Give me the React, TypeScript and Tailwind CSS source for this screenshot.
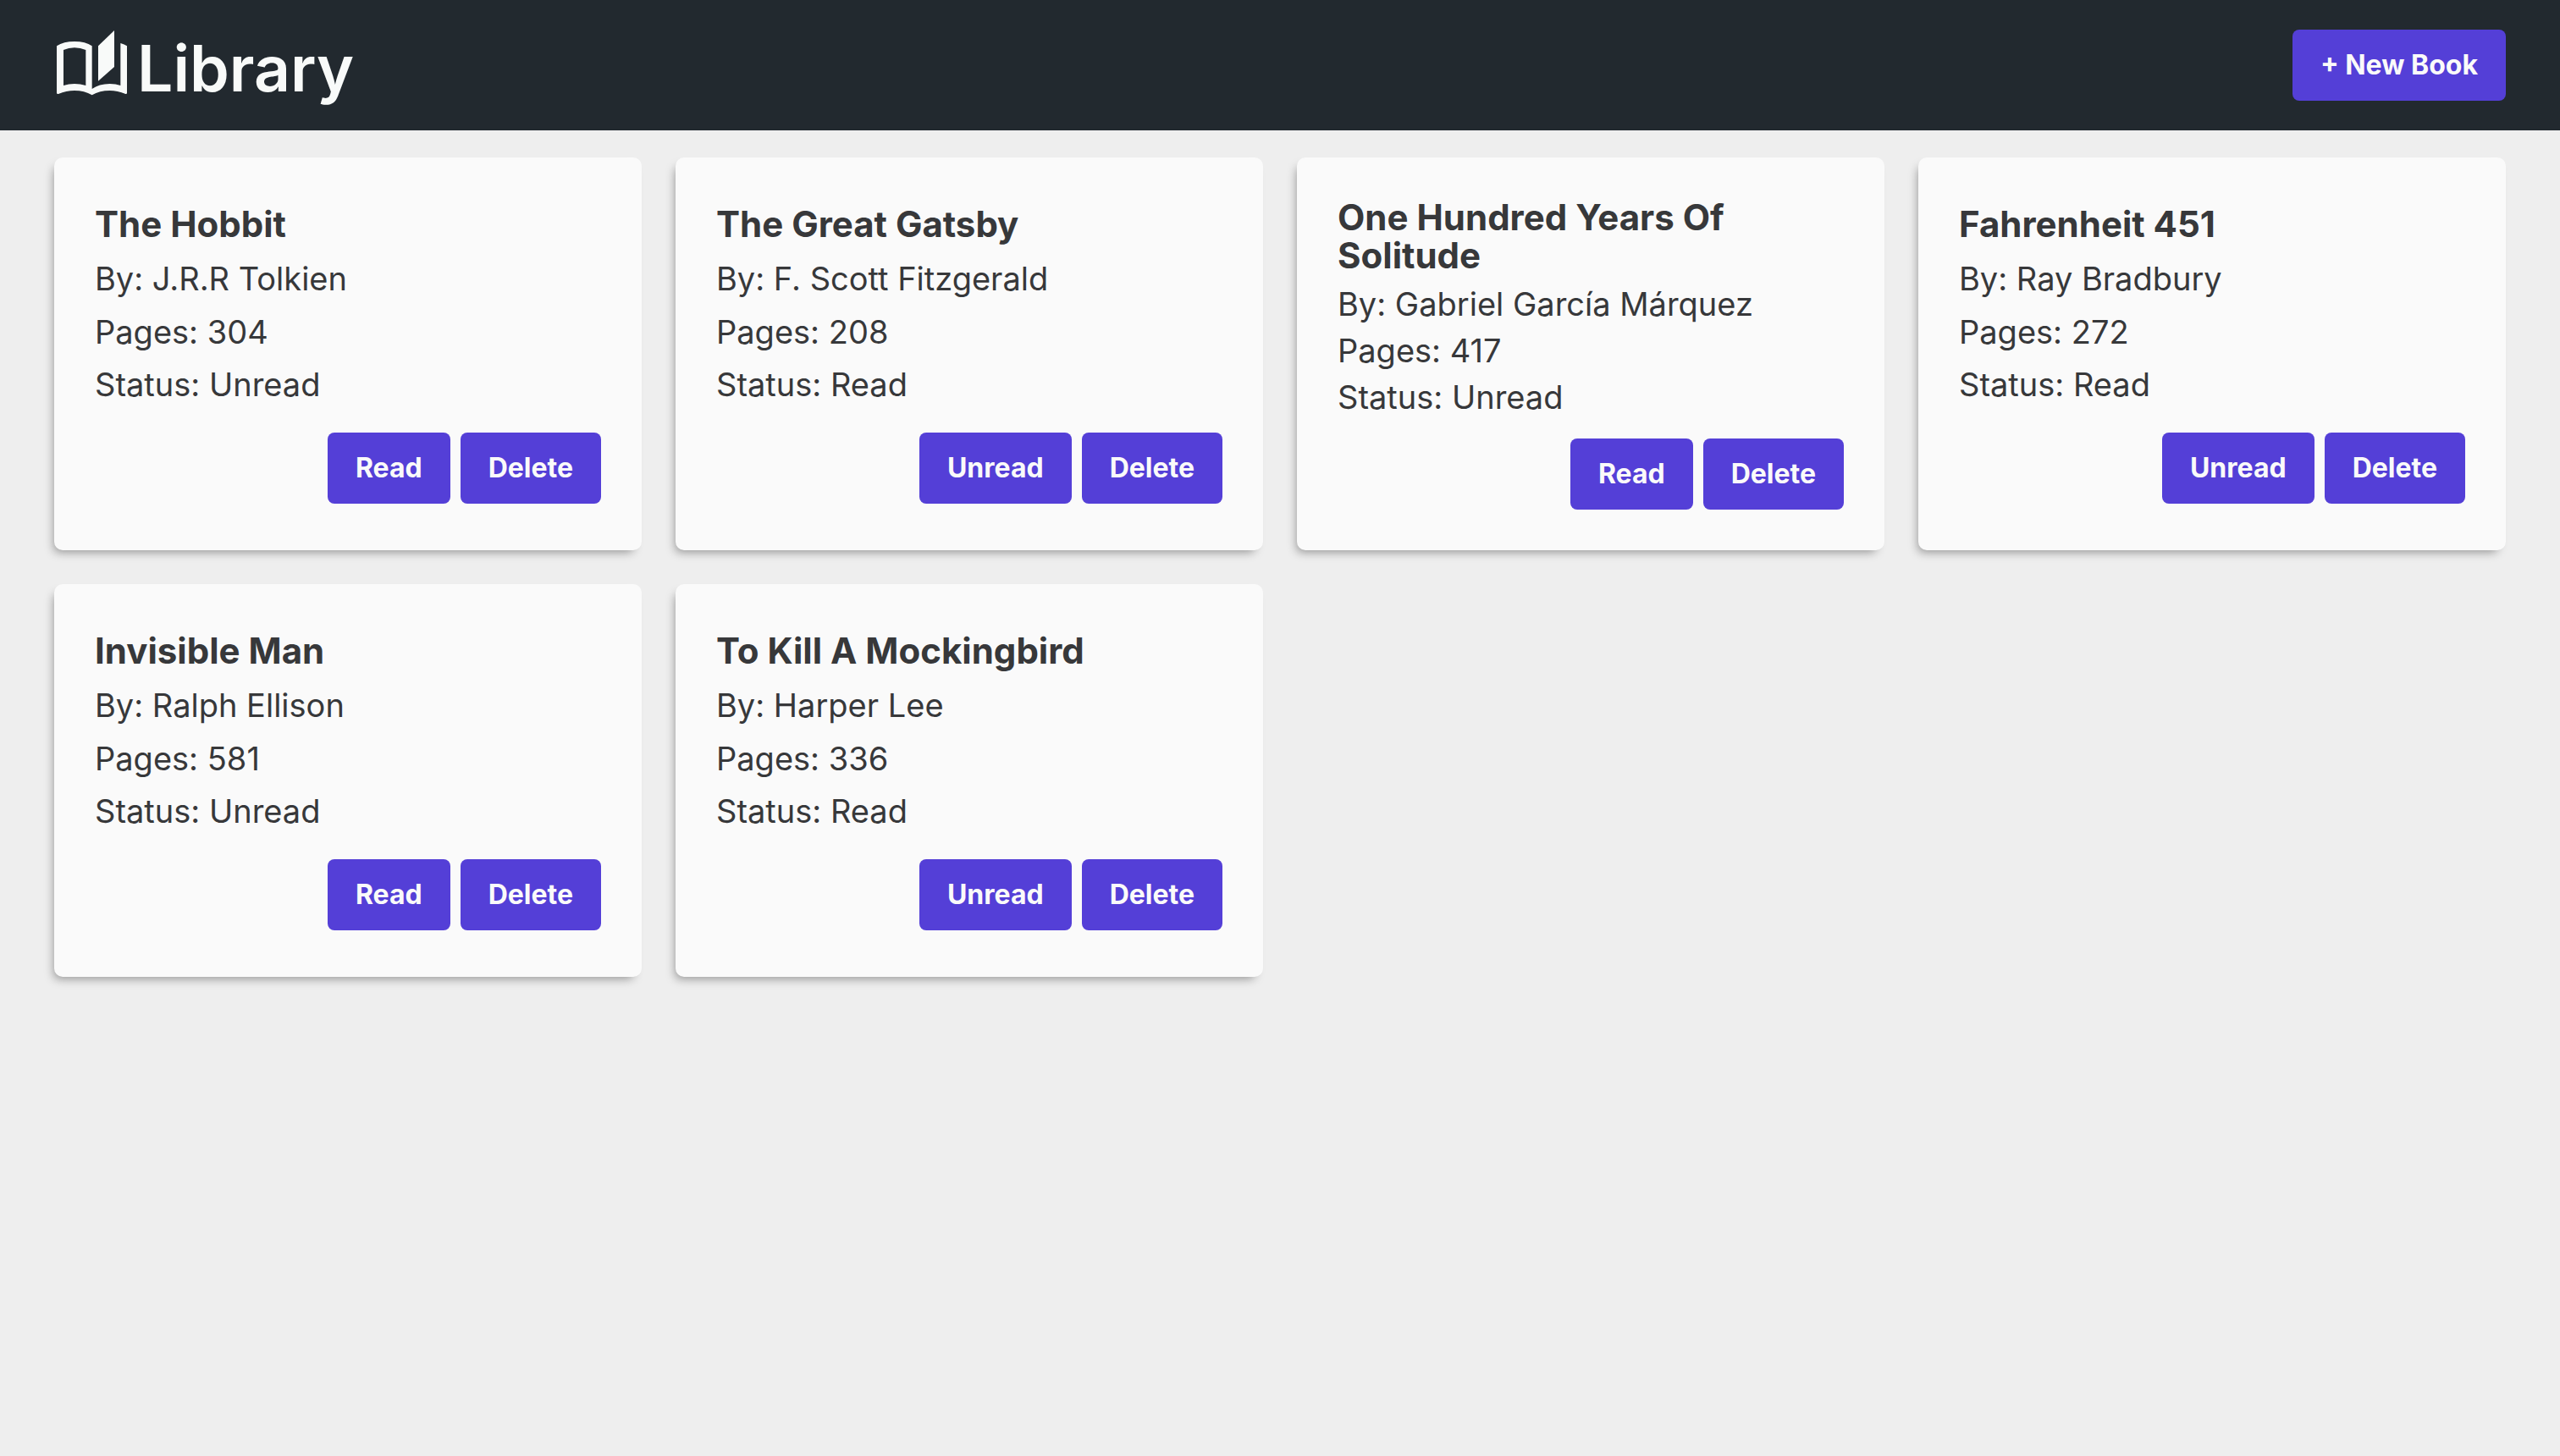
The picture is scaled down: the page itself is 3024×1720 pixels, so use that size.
import { useState } from "react";

type Book = {
  title: string;
  author: string;
  pages: number;
  read: boolean;
};

const initialBooks: Book[] = [
  { title: "The Hobbit", author: "J.R.R Tolkien", pages: 304, read: false },
  { title: "The Great Gatsby", author: "F. Scott Fitzgerald", pages: 208, read: true },
  { title: "One Hundred Years Of Solitude", author: "Gabriel García Márquez", pages: 417, read: false },
  { title: "Fahrenheit 451", author: "Ray Bradbury", pages: 272, read: true },
  { title: "Invisible Man", author: "Ralph Ellison", pages: 581, read: false },
  { title: "To Kill A Mockingbird", author: "Harper Lee", pages: 336, read: true },
];

function OpenBookIcon() {
  return (
    <svg viewBox="-9 -6 264 264" className="size-[88px]" fill="currentColor" aria-hidden="true">
      <path
        fillRule="evenodd"
        d="M0 55Q24 39 63 39Q102 39 125 55V207Q150 189 188 189Q210 189 226 195V45Q240 49 249 55V221Q249 226 244 225Q215 213 188 213Q152 213 125 229Q98 213 63 213Q34 213 6 225Q0 226 0 221ZM24 69V195Q42 189 63 189Q84 189 103 195V69Q84 61 63 61Q42 61 24 69Z"
      />
      <path d="M204 0V129L147 179V55Z" />
    </svg>
  );
}

function Button({ children, onClick }: { children: string; onClick?: () => void }) {
  return (
    <button
      type="button"
      onClick={onClick}
      className="h-[84px] cursor-pointer rounded-lg bg-[#543fd7] px-[33px] text-[32px] leading-none font-bold whitespace-nowrap text-[#fafafa]"
    >
      {children}
    </button>
  );
}

function BookCard({ book, onToggle, onDelete }: { book: Book; onToggle: () => void; onDelete: () => void }) {
  return (
    <article className="flex flex-col justify-evenly gap-[15px] rounded-[10px] bg-[#fafafa] p-12 shadow-[-5px_7px_12px_-5px_rgba(0,0,0,0.4)]">
      <h2 className="text-[42px] leading-[45px] font-bold">{book.title}</h2>
      <p className="text-[38px] leading-10">By: {book.author}</p>
      <p className="text-[38px] leading-10">Pages: {book.pages}</p>
      <p className="text-[38px] leading-10">Status: {book.read ? "Read" : "Unread"}</p>
      <div className="mt-[14px] flex justify-end gap-3">
        <Button onClick={onToggle}>{book.read ? "Unread" : "Read"}</Button>
        <Button onClick={onDelete}>Delete</Button>
      </div>
    </article>
  );
}

export default function App() {
  const [books, setBooks] = useState(initialBooks);

  const toggle = (title: string) =>
    setBooks(books.map((b) => (b.title === title ? { ...b, read: !b.read } : b)));
  const remove = (title: string) => setBooks(books.filter((b) => b.title !== title));

  return (
    <div className="min-h-screen bg-[#eeeeee] font-['Inter',sans-serif] text-[#37383a]">
      <header className="flex items-center justify-between bg-[#22292f] px-16 py-8">
        <h1 className="flex items-end gap-2.5 pt-0.5 text-[75px] leading-[82px] font-semibold text-[#f8faf9]">
          <OpenBookIcon />
          Library
        </h1>
        <Button>+ New Book</Button>
      </header>
      <main className="grid auto-rows-fr grid-cols-[repeat(auto-fill,minmax(600px,1fr))] gap-10 px-16 py-8">
        {books.map((book) => (
          <BookCard
            key={book.title}
            book={book}
            onToggle={() => toggle(book.title)}
            onDelete={() => remove(book.title)}
          />
        ))}
      </main>
    </div>
  );
}
